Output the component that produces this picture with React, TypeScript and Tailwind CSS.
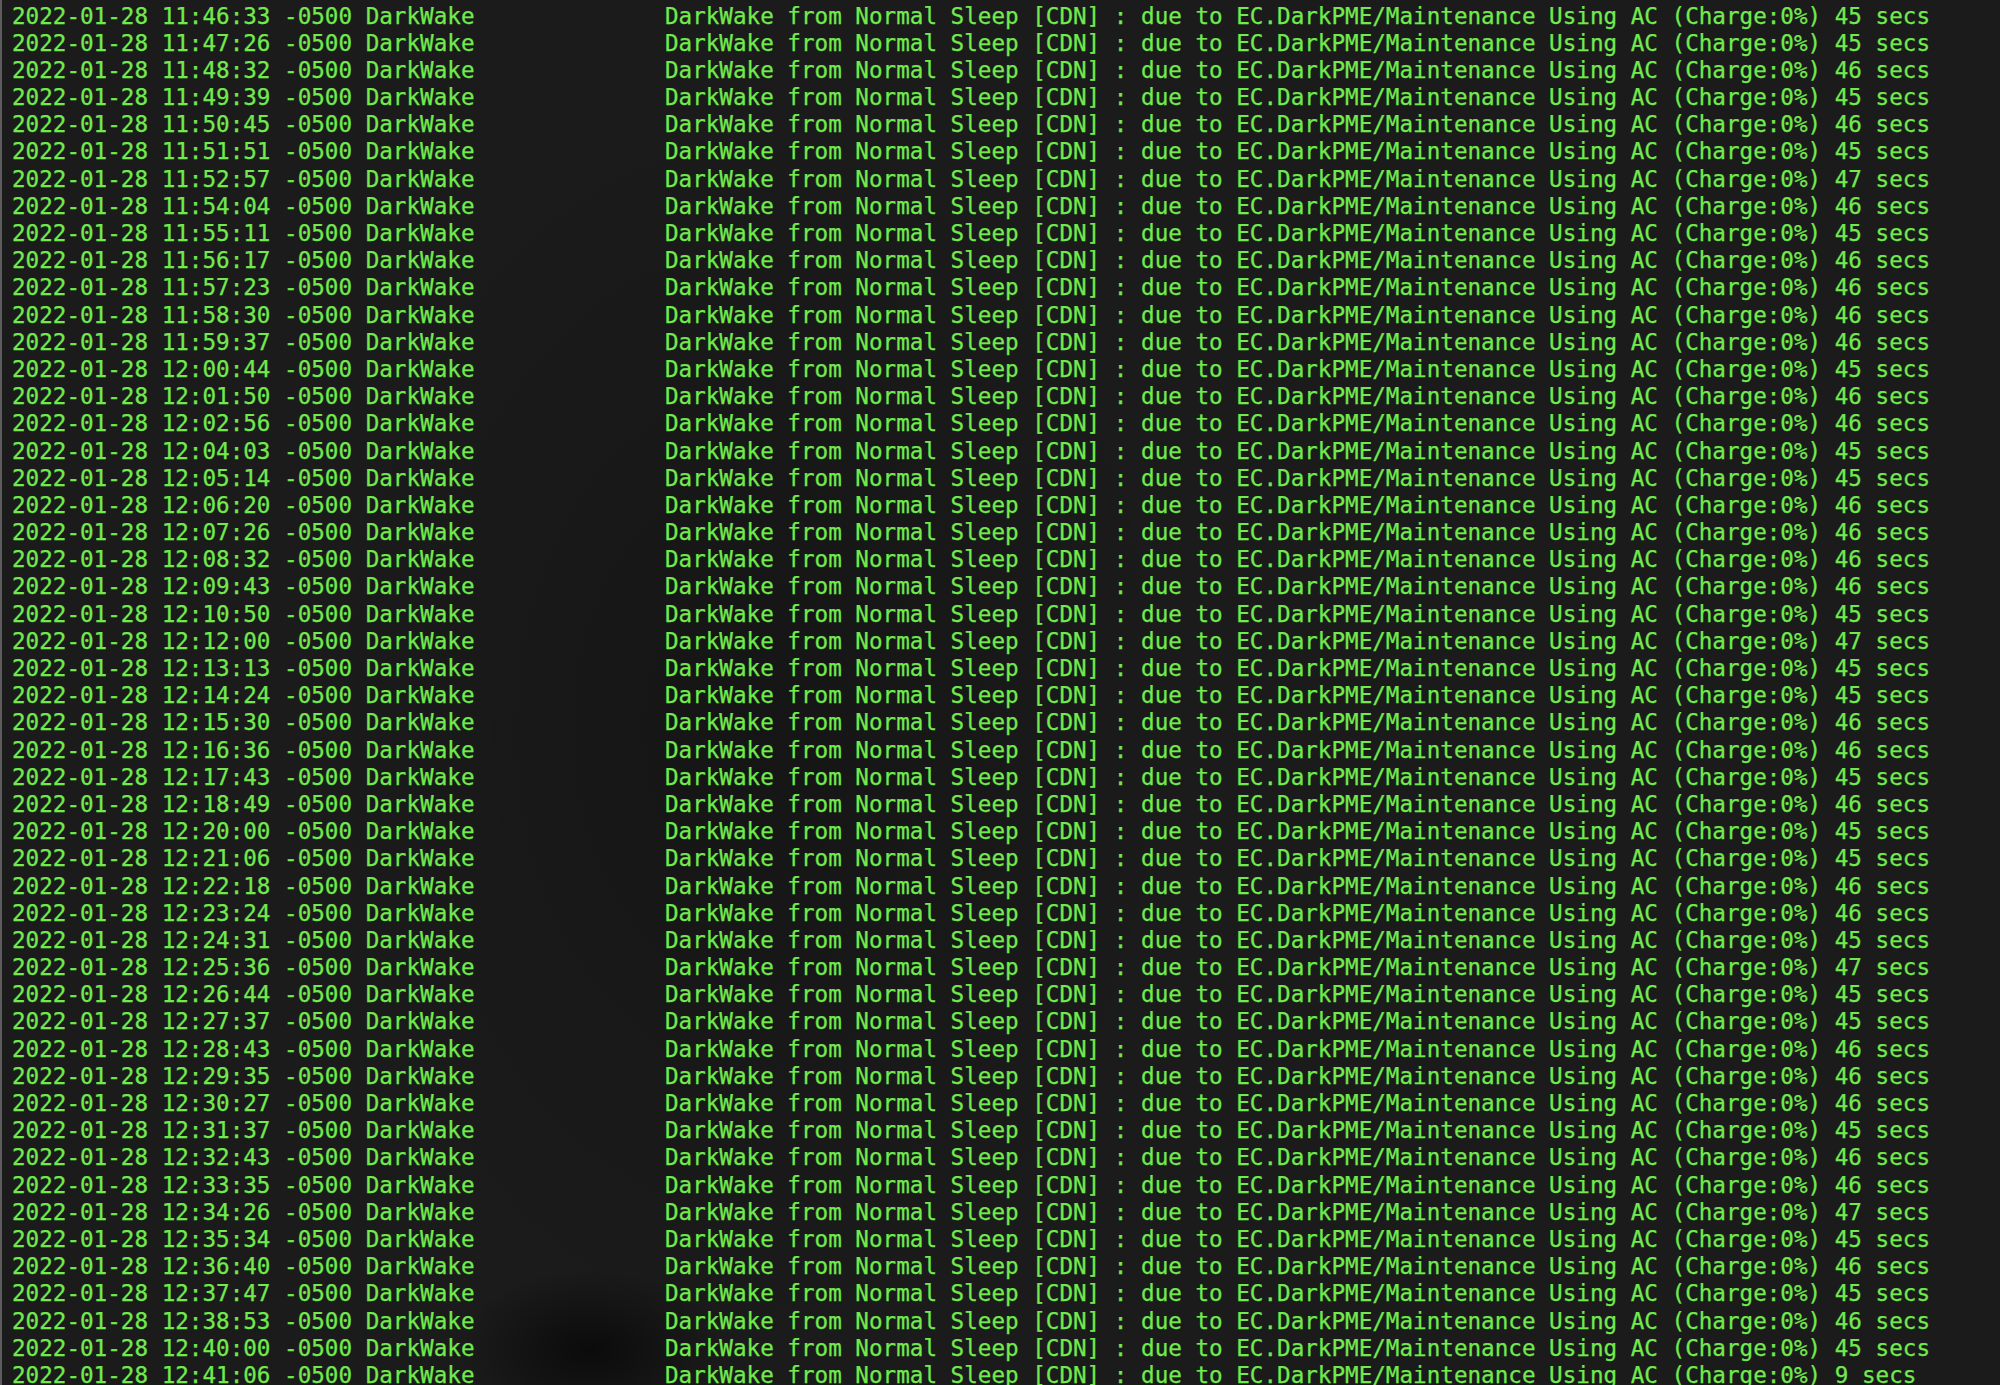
const rows: [string, number][] = [
  ["11:46:33", 45], ["11:47:26", 45], ["11:48:32", 46], ["11:49:39", 45],
  ["11:50:45", 46], ["11:51:51", 45], ["11:52:57", 47], ["11:54:04", 46],
  ["11:55:11", 45], ["11:56:17", 46], ["11:57:23", 46], ["11:58:30", 46],
  ["11:59:37", 46], ["12:00:44", 45], ["12:01:50", 46], ["12:02:56", 46],
  ["12:04:03", 45], ["12:05:14", 45], ["12:06:20", 46], ["12:07:26", 46],
  ["12:08:32", 46], ["12:09:43", 46], ["12:10:50", 45], ["12:12:00", 47],
  ["12:13:13", 45], ["12:14:24", 45], ["12:15:30", 46], ["12:16:36", 46],
  ["12:17:43", 45], ["12:18:49", 46], ["12:20:00", 45], ["12:21:06", 45],
  ["12:22:18", 46], ["12:23:24", 46], ["12:24:31", 45], ["12:25:36", 47],
  ["12:26:44", 45], ["12:27:37", 45], ["12:28:43", 46], ["12:29:35", 46],
  ["12:30:27", 46], ["12:31:37", 45], ["12:32:43", 46], ["12:33:35", 46],
  ["12:34:26", 47], ["12:35:34", 45], ["12:36:40", 46], ["12:37:47", 45],
  ["12:38:53", 46], ["12:40:00", 45], ["12:41:06", 9],
];

function LogLine({ time, secs }: { time: string; secs: number }) {
  const head = `2022-01-28 ${time} -0500 DarkWake`.padEnd(48, " ");
  return (
    <div className="whitespace-pre h-[27.2px] leading-[27.2px]">
      {head}DarkWake from Normal Sleep [CDN] : due to EC.DarkPME/Maintenance Using AC (Charge:0%) {secs} secs
    </div>
  );
}

export default function App() {
  return (
    <div className="w-[2000px] h-[1385px] overflow-hidden bg-[#1b1b1b] flex relative">
      {/* blurred window showing through the translucent terminal */}
      <div className="absolute left-[300px] top-[80px] w-[900px] h-[1300px] bg-[radial-gradient(ellipse_at_center,rgba(0,0,0,0.22),rgba(0,0,0,0)_70%)]" />
      <div className="absolute left-[460px] top-[1270px] w-[260px] h-[160px] bg-[radial-gradient(ellipse_at_center,rgba(0,0,0,0.6),rgba(0,0,0,0)_72%)]" />
      <div className="w-[2px] bg-[#5c5c5c] shrink-0" />
      <div className="relative pl-[10px] pt-[2.5px] text-[22.6px] text-[#72ea4e] font-['DejaVu_Sans_Mono',monospace] [-webkit-text-stroke:0.25px_#72ea4e]">
        {rows.map(([t, s]) => (
          <LogLine key={t} time={t} secs={s} />
        ))}
      </div>
    </div>
  );
}
